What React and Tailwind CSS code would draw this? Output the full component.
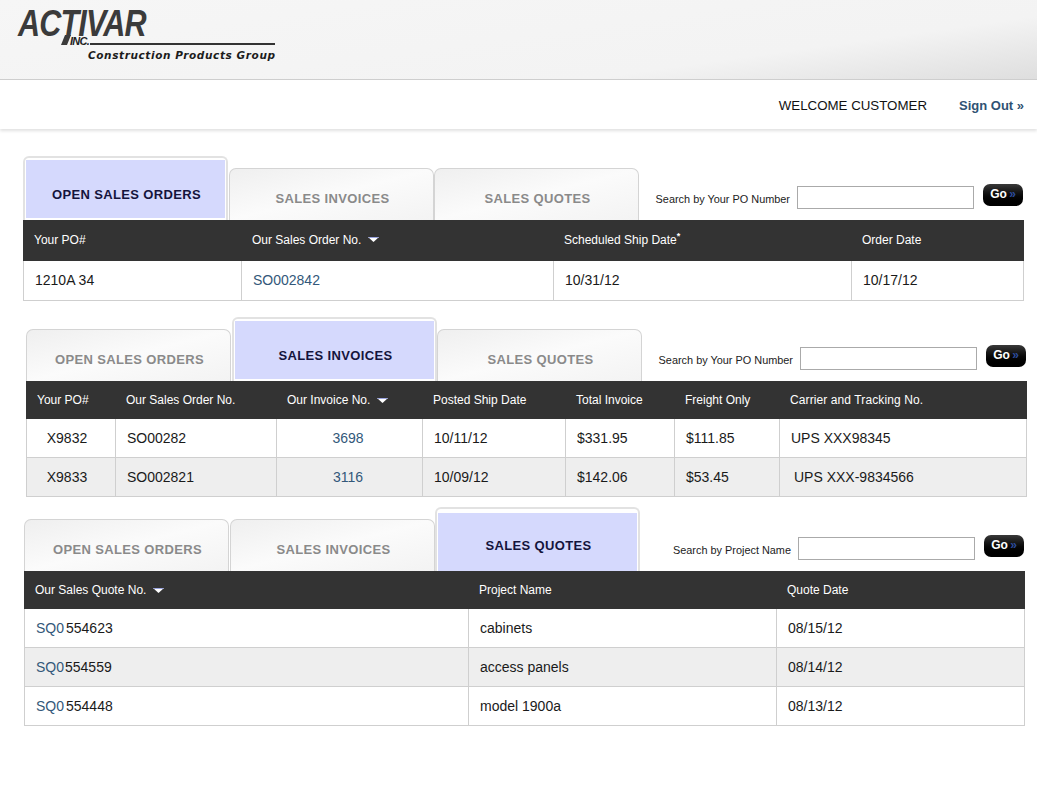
import React from "react";

const sans = "font-['Liberation_Sans',Arial,sans-serif]";

const Tab = ({ label, active, blue, tight }) => {
  if (active) {
    return (
      <div className={`w-[205px] h-[64px] border-2 border-b-0 border-[#e2e2e2] rounded-t-[6px] bg-white px-[1px] flex ${tight ? "" : "mr-px"}`}>
        <div className={`w-full bg-[#d5d9fd] text-center leading-[16px] pl-[2px] text-[13px] font-bold tracking-[0.35px] text-[#14143c] ${blue}`}>
          {label}
        </div>
      </div>
    );
  }
  return (
    <div className={`w-[205px] h-[52px] self-end border border-b-0 border-[#d4d4d4] rounded-t-[7px] bg-gradient-to-br from-[#efefef] via-[#fbfbfb] to-[#f3f3f3] flex items-center justify-center pt-[8px] pl-[2px] text-[13px] font-bold tracking-[0.35px] text-[#8a8a8a] ${tight ? "" : "mr-px"}`}>
      {label}
    </div>
  );
};

const SortArrow = () => (
  <svg className="inline-block ml-[3px] mb-[1px]" width="11" height="5" viewBox="0 0 11 5">
    <path d="M0 0h11L5.5 5z" fill="#fff" />
    <path d="M0 0h11l-1 1H1z" fill="#9aa4e0" />
  </svg>
);

const Search = ({ label }) => (
  <div className="flex-1 flex items-start justify-end pt-[28px] pr-[1px]">
    <span className="text-[10.9px] text-[#222] mt-[7px] mr-[7px]">{label}</span>
    <input className="w-[177px] h-[23px] mt-[2px] border border-[#aaa] bg-white" />
    <button className="ml-[9px] w-[40px] h-[22px] rounded-[7px] bg-gradient-to-b from-[#3a3a3a] via-[#0a0a0a] to-[#000] text-white text-[12px] font-bold pb-[3px]">
      Go <span className="text-[#2c4c9c] -ml-[1px]">»</span>
    </button>
  </div>
);

const Panel = ({ margin, active, blue, search, children }) => {
  const names = ["OPEN SALES ORDERS", "SALES INVOICES", "SALES QUOTES"];
  return (
    <section className={`w-[1001px] ${margin}`}>
      <div className="flex h-[64px]">
        {names.map((t, i) => (
          <Tab key={t} label={t} active={t === active} blue={blue} tight={i === 1} />
        ))}
        {search}
      </div>
      {children}
    </section>
  );
};

const link = "text-[#33587a]";
const th = "text-left align-middle font-normal text-white text-[12px] pl-[10px] border border-[#333333]";
const cell = "border border-[#cfcfcf] text-[14px] text-[#1a1a1a]";
const td = `${cell} pl-[11px]`;

export default function App() {
  return (
    <div className={`w-[1037px] h-[800px] bg-white overflow-hidden ${sans}`}>
      {/* Logo band */}
      <header className="h-[80px] border-b border-[#cfcfcf] bg-[linear-gradient(172deg,#f6f6f6_0%,#f3f3f3_72%,#dedede_100%)] pl-[18px] pt-[5px]">
        <div className="relative w-[260px] h-[70px]">
          <span className="absolute left-0 top-[6px] text-[36px] leading-[26px] font-bold italic tracking-[-1px] text-[#3b3b3b] scale-x-[0.85] origin-left">
            ACTIVAR
          </span>
          <svg className="absolute left-[43px] top-[30px]" width="12" height="11" viewBox="0 0 12 11">
            <path d="M4 0h6L6 10H0z" fill="#3b3b3b" />
          </svg>
          <span className="absolute left-[52px] top-[32px] text-[11px] leading-[8px] font-bold italic tracking-[-0.7px] text-[#222]">INC.</span>
          <div className="absolute left-[72px] top-[38px] w-[185px] h-[2px] bg-[#333]" />
          <span className="absolute left-[70px] top-[44px] text-[10.5px] leading-[12px] font-bold italic tracking-[0.6px] text-[#1c1c1c] font-['DejaVu_Sans',sans-serif] whitespace-nowrap">
            Construction Products Group
          </span>
        </div>
      </header>

      {/* Welcome bar */}
      <div className="h-[49px] flex items-center justify-end pr-[13px] pt-[2px] shadow-[0_2px_3px_rgba(0,0,0,0.12)]">
        <span className="text-[13.3px] text-[#111] mr-[32px]">WELCOME CUSTOMER</span>
        <a className="text-[13px] font-bold text-[#2f5273]">Sign Out »</a>
      </div>

      {/* Open sales orders */}
      <div className="pt-[27px]">
        <Panel
          margin="ml-[23px]"
          active="OPEN SALES ORDERS"
          blue="mt-[2px] mb-[2px] pt-[27px]"
          search={<Search label="Search by Your PO Number" />}
        >
          <table className="w-[1001px] table-fixed border-collapse">
            <thead>
              <tr className="h-[40px] bg-[#333333]">
                <th className={`${th} w-[218px] pb-[2px]`}>Your PO#</th>
                <th className={`${th} w-[312px] pb-[2px]`}>Our Sales Order No. <SortArrow /></th>
                <th className={`${th} w-[298px] pb-[2px]`}>
                  Scheduled Ship Date<sup className="text-[9px] font-bold -top-[5px]">*</sup>
                </th>
                <th className={`${th} pb-[2px]`}>Order Date</th>
              </tr>
            </thead>
            <tbody>
              <tr className="h-[40px]">
                <td className={td}>1210A 34</td>
                <td className={`${td} ${link}`}>SO002842</td>
                <td className={td}>10/31/12</td>
                <td className={td}>10/17/12</td>
              </tr>
            </tbody>
          </table>
        </Panel>
      </div>

      {/* Sales invoices */}
      <div className="pt-[16px]">
        <Panel
          margin="ml-[26px]"
          active="SALES INVOICES"
          blue="mt-[2px] mb-[2px] pt-[27px]"
          search={<Search label="Search by Your PO Number" />}
        >
          <table className="w-[1001px] table-fixed border-collapse">
            <thead>
              <tr className="h-[37px] bg-[#333333]">
                <th className={`${th} w-[89px]`}>Your PO#</th>
                <th className={`${th} w-[161px]`}>Our Sales Order No.</th>
                <th className={`${th} w-[146px]`}>Our Invoice No. <SortArrow /></th>
                <th className={`${th} w-[143px]`}>Posted Ship Date</th>
                <th className={`${th} w-[109px]`}>Total Invoice</th>
                <th className={`${th} w-[105px]`}>Freight Only</th>
                <th className={`${th} tracking-[0.1px]`}>Carrier and Tracking No.</th>
              </tr>
            </thead>
            <tbody>
              <tr className="h-[39px]">
                <td className={`${cell} text-center pr-[8px]`}>X9832</td>
                <td className={td}>SO00282</td>
                <td className={`${cell} ${link} text-center pr-[3px]`}>3698</td>
                <td className={td}>10/11/12</td>
                <td className={td}>$331.95</td>
                <td className={td}>$111.85</td>
                <td className={`${cell} pl-[11px] text-[13.4px]`}>UPS XXX98345</td>
              </tr>
              <tr className="h-[39px] bg-[#eeeeee]">
                <td className={`${cell} text-center pr-[8px]`}>X9833</td>
                <td className={td}>SO002821</td>
                <td className={`${cell} ${link} text-center pr-[3px]`}>3116</td>
                <td className={td}>10/09/12</td>
                <td className={td}>$142.06</td>
                <td className={td}>$53.45</td>
                <td className={`${cell} pl-[14px] text-[13.4px]`}>UPS XXX-9834566</td>
              </tr>
            </tbody>
          </table>
        </Panel>
      </div>

      {/* Sales quotes */}
      <div className="pt-[10px]">
        <Panel
          margin="ml-[24px]"
          active="SALES QUOTES"
          blue="mt-[4px] pt-[25px]"
          search={<Search label="Search by Project Name" />}
        >
          <table className="w-[1001px] table-fixed border-collapse">
            <thead>
              <tr className="h-[37px] bg-[#333333]">
                <th className={`${th} w-[444px]`}>Our Sales Quote No. <SortArrow /></th>
                <th className={`${th} w-[308px]`}>Project Name</th>
                <th className={th}>Quote Date</th>
              </tr>
            </thead>
            <tbody>
              <tr className="h-[39px]">
                <td className={td}><span className={`${link} mr-[2px]`}>SQ0</span>554623</td>
                <td className={td}>cabinets</td>
                <td className={td}>08/15/12</td>
              </tr>
              <tr className="h-[39px] bg-[#eeeeee]">
                <td className={td}><span className={`${link} mr-px`}>SQ0</span>554559</td>
                <td className={td}>access panels</td>
                <td className={td}>08/14/12</td>
              </tr>
              <tr className="h-[39px]">
                <td className={td}><span className={`${link} mr-[2px]`}>SQ0</span>554448</td>
                <td className={td}>model 1900a</td>
                <td className={td}>08/13/12</td>
              </tr>
            </tbody>
          </table>
        </Panel>
      </div>
    </div>
  );
}
